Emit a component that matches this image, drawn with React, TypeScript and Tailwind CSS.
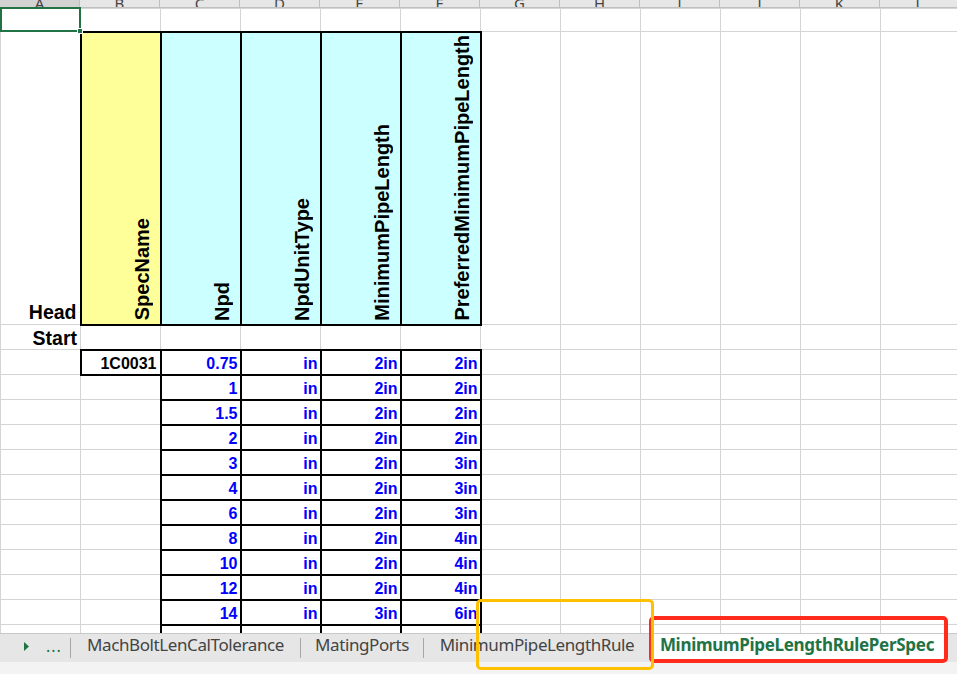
import React from 'react';

const columns = ['A', 'B', 'C', 'D', 'E', 'F', 'G', 'H', 'I', 'J', 'K', 'L'];

const rows: [string, string, string, string][] = [
  ['1', 'in', '2in', '2in'],
  ['1.5', 'in', '2in', '2in'],
  ['2', 'in', '2in', '2in'],
  ['3', 'in', '2in', '3in'],
  ['4', 'in', '2in', '3in'],
  ['6', 'in', '2in', '3in'],
  ['8', 'in', '2in', '4in'],
  ['10', 'in', '2in', '4in'],
  ['12', 'in', '2in', '4in'],
  ['14', 'in', '3in', '6in'],
];

const grid = 'border border-[#d4d4d4] p-0';
const thick = 'border-2 border-black p-0';
const value = `${thick} text-right align-bottom pr-[2px] pb-[1px] text-[16px] leading-[18px] font-bold text-[#0000ff]`;

const Empty = ({ count }: { count: number }) => (
  <>
    {Array.from({ length: count }).map((_, i) => (
      <td key={i} className={grid} />
    ))}
  </>
);

const VerticalHeader = ({ label, yellow }: { label: string; yellow?: boolean }) => (
  <td
    className={`${thick} ${yellow ? 'bg-[#ffff99]' : 'bg-[#ccffff]'} text-right align-bottom pr-[8px] pb-[3px] text-[0px] leading-none`}
  >
    <span className="inline-block align-bottom [writing-mode:vertical-rl] rotate-180 whitespace-nowrap text-[20px] leading-[20px] font-bold text-black">
      {label}
    </span>
  </td>
);

const Tab = ({ label, width }: { label: string; width: string }) => (
  <div className={`${width} flex justify-center items-center pb-[7px] text-[17px] tracking-[-0.4px] text-[#444444]`}>
    {label}
  </div>
);

const Separator = () => <div className="self-center mb-[1px] w-px h-[20px] bg-[#a6a6a6]" />;

export default function App() {
  return (
    <div className="relative w-[957px] h-[674px] overflow-hidden bg-white flex flex-col font-['Liberation_Sans',Arial,sans-serif]">
      {/* Sheet */}
      <div className="relative h-[633px] overflow-hidden">
        {/* Column letters, cut off at the top */}
        <div className="flex h-[8px] overflow-hidden bg-[#e6e6e6] border-b border-[#bfbfbf] font-['Noto_Sans',sans-serif]">
          {columns.map((c, i) => (
            <div
              key={c}
              className={`w-[80px] shrink-0 flex justify-center items-end border-r border-[#bfbfbf] ${i === 0 ? 'bg-[#d2d2d2]' : ''}`}
            >
              <span className="text-[15px] leading-none text-[#444444] translate-y-[4px]">{c}</span>
            </div>
          ))}
        </div>

        <table className="border-collapse table-fixed w-[960px]">
          <colgroup>
            {columns.map((c) => (
              <col key={c} className="w-[80px]" />
            ))}
          </colgroup>
          <tbody>
            <tr className="h-[23px]">
              <Empty count={12} />
            </tr>
            <tr className="h-[293px]">
              <td className={`${grid} text-right align-bottom pr-[3px] pb-[1px] text-[19.5px] leading-[22px] font-bold text-black`}>
                Head
              </td>
              <VerticalHeader label="SpecName" yellow />
              <VerticalHeader label="Npd" />
              <VerticalHeader label="NpdUnitType" />
              <VerticalHeader label="MinimumPipeLength" />
              <VerticalHeader label="PreferredMinimumPipeLength" />
              <Empty count={6} />
            </tr>
            <tr className="h-[25px]">
              <td className={`${grid} text-right align-bottom pr-[3px] text-[19.5px] leading-[22px] font-bold text-black`}>
                Start
              </td>
              <Empty count={11} />
            </tr>
            <tr className="h-[25px]">
              <td className={grid} />
              <td className={`${thick} text-right align-bottom pr-[3px] pb-[1px] text-[16px] leading-[18px] font-bold text-black`}>
                1C0031
              </td>
              <td className={value}>0.75</td>
              <td className={value}>in</td>
              <td className={value}>2in</td>
              <td className={value}>2in</td>
              <Empty count={6} />
            </tr>
            {rows.map((r) => (
              <tr key={r[0]} className="h-[25px]">
                <Empty count={2} />
                {r.map((v, i) => (
                  <td key={i} className={value}>
                    {v}
                  </td>
                ))}
                <Empty count={6} />
              </tr>
            ))}
            <tr className="h-[25px]">
              <Empty count={2} />
              <td className={value} />
              <td className={value} />
              <td className={value} />
              <td className={value} />
              <Empty count={6} />
            </tr>
          </tbody>
        </table>

        {/* Active cell A1 */}
        <div className="absolute left-0 top-[7px] w-[81px] h-[25px] border-2 border-[#217346]">
          <div className="absolute -right-[4px] -bottom-[4px] w-[6px] h-[6px] bg-[#217346] border border-white" />
        </div>
      </div>

      {/* Sheet tabs */}
      <div className="h-[29px] flex items-stretch bg-[#e6e6e6] border-t border-[#c8c8c8] font-['Noto_Sans',sans-serif]">
        <div className="w-[70px] flex items-center pb-[4px]">
          <svg className="ml-[24px]" width="5" height="9" viewBox="0 0 5 9">
            <polygon points="0,0 5,4.5 0,9" fill="#217346" />
          </svg>
          <span className="ml-[17px] text-[16px] leading-none text-[#217346] tracking-[1px]">...</span>
        </div>
        <Separator />
        <Tab label="MachBoltLenCalTolerance" width="w-[229px]" />
        <Separator />
        <Tab label="MatingPorts" width="w-[122px]" />
        <Separator />
        <Tab label="MinimumPipeLengthRule" width="w-[226px]" />
        <div className="w-[294px] mb-[1px] flex justify-center items-center pb-[4px] bg-white border-b-2 border-[#217346] text-[17px] tracking-[-0.3px] font-bold text-[#217346]">
          MinimumPipeLengthRulePerSpec
        </div>
      </div>
      <div className="flex-1 bg-[#f3f3f3]" />

      {/* Annotation frames */}
      <div className="absolute left-[649px] top-[616px] w-[299px] h-[47px] border-[4px] border-[#ff2b1c] rounded-[5px]" />
      <div className="absolute left-[476px] top-[599px] w-[178px] h-[71px] border-[3px] border-[#ffc000] rounded-[5px]" />
    </div>
  );
}
